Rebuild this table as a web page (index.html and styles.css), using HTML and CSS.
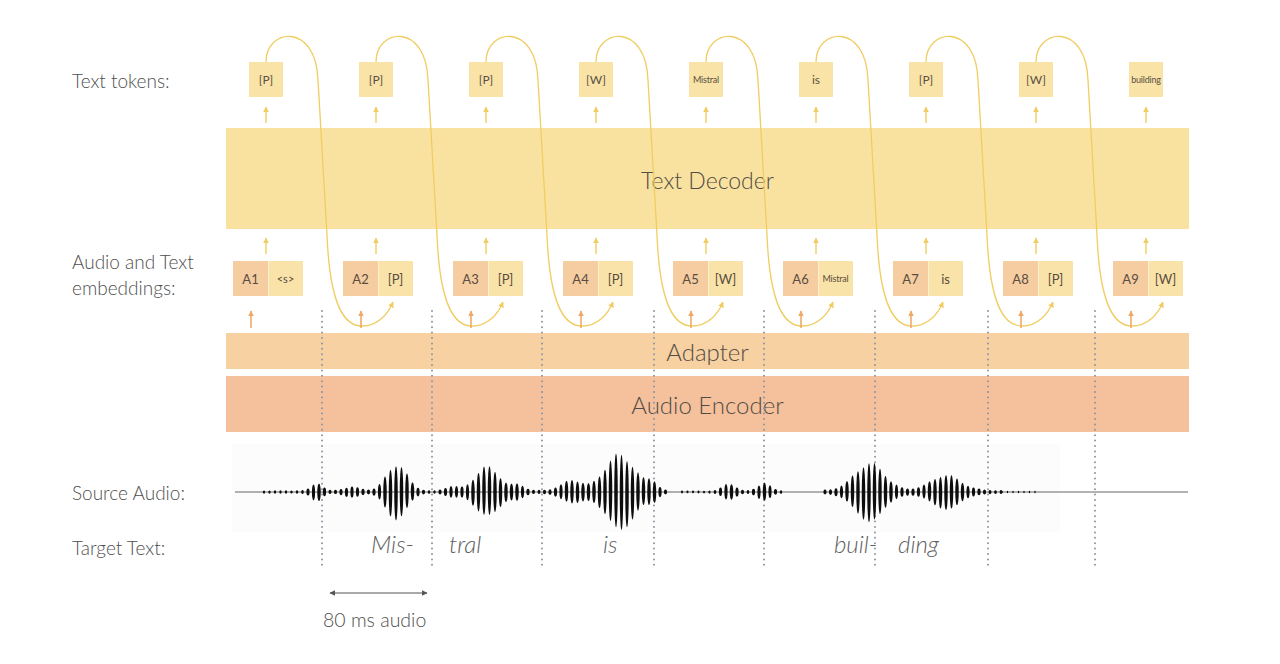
FILE: index.html
```html
<!DOCTYPE html>
<html lang="en">
<head>
<meta charset="utf-8">
<title>Streaming speech-to-text architecture</title>
<link rel="stylesheet" href="styles.css">
</head>
<body>
<div class="diagram">
  <div class="row row-tokens">
    <div class="label">Text tokens:</div>
    <div class="track">
      <div class="cell"><div class="tok">[P]</div></div>
      <div class="cell"><div class="tok">[P]</div></div>
      <div class="cell"><div class="tok">[P]</div></div>
      <div class="cell"><div class="tok">[W]</div></div>
      <div class="cell"><div class="tok small">Mistral</div></div>
      <div class="cell"><div class="tok">is</div></div>
      <div class="cell"><div class="tok">[P]</div></div>
      <div class="cell"><div class="tok">[W]</div></div>
      <div class="cell"><div class="tok small">building</div></div>
    </div>
  </div>

  <div class="row row-decoder">
    <div class="label"></div>
    <div class="band decoder">Text Decoder</div>
  </div>

  <div class="row row-emb">
    <div class="label">Audio and Text<br>embeddings:</div>
    <div class="track emb-track">
      <div class="cell"><div class="emb"><span class="a">A1</span><span class="t mid">&lt;s&gt;</span></div></div>
      <div class="cell"><div class="emb"><span class="a">A2</span><span class="t">[P]</span></div></div>
      <div class="cell"><div class="emb"><span class="a">A3</span><span class="t">[P]</span></div></div>
      <div class="cell"><div class="emb"><span class="a">A4</span><span class="t">[P]</span></div></div>
      <div class="cell"><div class="emb"><span class="a">A5</span><span class="t">[W]</span></div></div>
      <div class="cell"><div class="emb"><span class="a">A6</span><span class="t small">Mistral</span></div></div>
      <div class="cell"><div class="emb"><span class="a">A7</span><span class="t">is</span></div></div>
      <div class="cell"><div class="emb"><span class="a">A8</span><span class="t">[P]</span></div></div>
      <div class="cell"><div class="emb"><span class="a">A9</span><span class="t">[W]</span></div></div>
    </div>
  </div>

  <div class="row row-adapter">
    <div class="label"></div>
    <div class="band adapter">Adapter</div>
  </div>

  <div class="row row-encoder">
    <div class="label"></div>
    <div class="band encoder">Audio Encoder</div>
  </div>

  <div class="row row-audio">
    <div class="label">Source Audio:</div>
    <div class="wave-panel"></div>
  </div>

  <div class="row row-target">
    <div class="label">Target Text:</div>
  </div>

  <div class="row row-scale">
    <div class="label"></div>
    <div class="scale-text">80 ms audio</div>
  </div>

  <svg class="overlay" width="1280" height="664" viewBox="0 0 1280 664">
    <defs>
      <marker id="hy" viewBox="0 0 10 10" refX="9" refY="5" markerWidth="6" markerHeight="6" markerUnits="userSpaceOnUse" orient="auto">
        <path d="M0,0 L10,5 L0,10 z" fill="#F0CD62"/>
      </marker>
      <marker id="ho" viewBox="0 0 10 10" refX="9" refY="5" markerWidth="6" markerHeight="6" markerUnits="userSpaceOnUse" orient="auto">
        <path d="M0,0 L10,5 L0,10 z" fill="#EDAA68"/>
      </marker>
      <marker id="hg" viewBox="0 0 10 10" refX="9" refY="5" markerWidth="6" markerHeight="6" markerUnits="userSpaceOnUse" orient="auto-start-reverse">
        <path d="M0,0 L10,5 L0,10 z" fill="#555"/>
      </marker>
    </defs>

    <!-- dotted time boundaries -->
    <g class="dots">
      <line x1="322" y1="311" x2="322" y2="568"/>
      <line x1="432" y1="311" x2="432" y2="568"/>
      <line x1="542" y1="311" x2="542" y2="568"/>
      <line x1="654" y1="311" x2="654" y2="568"/>
      <line x1="764" y1="311" x2="764" y2="568"/>
      <line x1="875" y1="311" x2="875" y2="568"/>
      <line x1="988" y1="311" x2="988" y2="568"/>
      <line x1="1095" y1="311" x2="1095" y2="568"/>
    </g>

    <!-- feedback curves: token i -> embedding i+1 -->
    <g class="curves">
      <path d="M266,62 C266,28 316,22 318,80 L327,235 C330,310 346,326 362,326 C378,326 388,314 393,302" marker-end="url(#hy)"/>
      <path transform="translate(110,0)" d="M266,62 C266,28 316,22 318,80 L327,235 C330,310 346,326 362,326 C378,326 388,314 393,302" marker-end="url(#hy)"/>
      <path transform="translate(220,0)" d="M266,62 C266,28 316,22 318,80 L327,235 C330,310 346,326 362,326 C378,326 388,314 393,302" marker-end="url(#hy)"/>
      <path transform="translate(330,0)" d="M266,62 C266,28 316,22 318,80 L327,235 C330,310 346,326 362,326 C378,326 388,314 393,302" marker-end="url(#hy)"/>
      <path transform="translate(440,0)" d="M266,62 C266,28 316,22 318,80 L327,235 C330,310 346,326 362,326 C378,326 388,314 393,302" marker-end="url(#hy)"/>
      <path transform="translate(550,0)" d="M266,62 C266,28 316,22 318,80 L327,235 C330,310 346,326 362,326 C378,326 388,314 393,302" marker-end="url(#hy)"/>
      <path transform="translate(660,0)" d="M266,62 C266,28 316,22 318,80 L327,235 C330,310 346,326 362,326 C378,326 388,314 393,302" marker-end="url(#hy)"/>
      <path transform="translate(770,0)" d="M266,62 C266,28 316,22 318,80 L327,235 C330,310 346,326 362,326 C378,326 388,314 393,302" marker-end="url(#hy)"/>
    </g>

    <!-- decoder -> tokens arrows -->
    <g class="up-y">
      <line x1="266" y1="123" x2="266" y2="107" marker-end="url(#hy)"/>
      <line x1="376" y1="123" x2="376" y2="107" marker-end="url(#hy)"/>
      <line x1="486" y1="123" x2="486" y2="107" marker-end="url(#hy)"/>
      <line x1="596" y1="123" x2="596" y2="107" marker-end="url(#hy)"/>
      <line x1="706" y1="123" x2="706" y2="107" marker-end="url(#hy)"/>
      <line x1="816" y1="123" x2="816" y2="107" marker-end="url(#hy)"/>
      <line x1="926" y1="123" x2="926" y2="107" marker-end="url(#hy)"/>
      <line x1="1036" y1="123" x2="1036" y2="107" marker-end="url(#hy)"/>
      <line x1="1146" y1="123" x2="1146" y2="107" marker-end="url(#hy)"/>
      <!-- embeddings -> decoder -->
      <line x1="266" y1="254" x2="266" y2="238" marker-end="url(#hy)"/>
      <line x1="376" y1="254" x2="376" y2="238" marker-end="url(#hy)"/>
      <line x1="486" y1="254" x2="486" y2="238" marker-end="url(#hy)"/>
      <line x1="596" y1="254" x2="596" y2="238" marker-end="url(#hy)"/>
      <line x1="706" y1="254" x2="706" y2="238" marker-end="url(#hy)"/>
      <line x1="816" y1="254" x2="816" y2="238" marker-end="url(#hy)"/>
      <line x1="926" y1="254" x2="926" y2="238" marker-end="url(#hy)"/>
      <line x1="1036" y1="254" x2="1036" y2="238" marker-end="url(#hy)"/>
      <line x1="1146" y1="254" x2="1146" y2="238" marker-end="url(#hy)"/>
    </g>

    <!-- adapter -> audio embeddings -->
    <g class="up-o">
      <line x1="251" y1="328" x2="251" y2="311" marker-end="url(#ho)"/>
      <line x1="361" y1="328" x2="361" y2="311" marker-end="url(#ho)"/>
      <line x1="471" y1="328" x2="471" y2="311" marker-end="url(#ho)"/>
      <line x1="581" y1="328" x2="581" y2="311" marker-end="url(#ho)"/>
      <line x1="691" y1="328" x2="691" y2="311" marker-end="url(#ho)"/>
      <line x1="801" y1="328" x2="801" y2="311" marker-end="url(#ho)"/>
      <line x1="911" y1="328" x2="911" y2="311" marker-end="url(#ho)"/>
      <line x1="1021" y1="328" x2="1021" y2="311" marker-end="url(#ho)"/>
      <line x1="1131" y1="328" x2="1131" y2="311" marker-end="url(#ho)"/>
    </g>

    <!-- waveform -->
    <line class="baseline" x1="235" y1="492" x2="1188" y2="492"/>
    <g id="wave" class="wave"></g>

    <!-- target text -->
    <g class="target">
      <text x="371" y="553">Mis-</text>
      <text x="449" y="553">tral</text>
      <text x="603" y="553">is</text>
      <text x="834" y="553">buil-</text>
      <text x="898" y="553">ding</text>
    </g>

    <!-- 80 ms scale -->
    <line class="scale" x1="330" y1="593" x2="427" y2="593" marker-start="url(#hg)" marker-end="url(#hg)"/>
  </svg>
</div>
<script src="wave.js"></script>
</body>
</html>
```

FILE: styles.css
```css
html, body {
  margin: 0;
  padding: 0;
  background: #ffffff;
}

.diagram {
  position: relative;
  width: 1280px;
  height: 664px;
  overflow: hidden;
  font-family: Lato, "Open Sans", "DejaVu Sans", sans-serif;
  font-weight: 300;
  color: #5a5a5a;
}

.row {
  display: flex;
}

.label {
  flex: none;
  width: 139px;
  padding-left: 72px;
  font-size: 19px;
  line-height: 20px;
  color: #4f4f4f;
}

.track {
  display: grid;
  grid-template-columns: repeat(9, 110px);
  align-content: start;
}

.cell {
  display: flex;
  justify-content: center;
}

/* text tokens */
.row-tokens {
  height: 128px;
}

.row-tokens .label {
  padding-top: 71px;
}

.row-tokens .track {
  padding-top: 62px;
}

.tok {
  width: 34px;
  height: 35px;
  background: #f9e3a6;
  display: flex;
  align-items: center;
  justify-content: center;
  font-size: 12px;
  font-weight: 400;
  color: #5a5044;
}

.tok.small {
  font-size: 9px;
  letter-spacing: -0.2px;
}

/* bands */
.band {
  flex: none;
  margin-left: 15px;
  width: 963px;
  display: flex;
  align-items: center;
  justify-content: center;
  color: #524c46;
}

.row-decoder {
  height: 101px;
}

.decoder {
  height: 101px;
  background: #f9e29f;
  font-size: 23px;
  padding-top: 2px;
  box-sizing: border-box;
}

/* embeddings */
.row-emb {
  height: 104px;
}

.row-emb .label {
  padding-top: 20px;
  line-height: 26px;
}

.emb-track {
  padding-top: 32px;
  padding-left: 2px;
}

.emb {
  display: flex;
  height: 35px;
}

.emb span {
  width: 35px;
  display: flex;
  align-items: center;
  justify-content: center;
  font-size: 13px;
  font-weight: 400;
  color: #5a4c40;
}

.emb .a {
  background: #f5cda0;
}

.emb .t {
  background: #f9e3a8;
  box-shadow: inset 1px 0 0 rgba(255, 255, 255, 0.45);
}

.emb .t.mid {
  font-size: 11px;
}

.emb .t.small {
  font-size: 9px;
  letter-spacing: -0.2px;
}

.row-adapter {
  height: 36px;
}

.adapter {
  height: 36px;
  background: #f7d1a1;
  font-size: 24px;
}

.row-encoder {
  height: 56px;
  margin-top: 7px;
}

.encoder {
  height: 56px;
  background: #f5c19c;
  font-size: 24px;
}

/* audio */
.row-audio {
  height: 88px;
}

.row-audio .label {
  padding-top: 51px;
}

.wave-panel {
  flex: none;
  margin-left: 21px;
  margin-top: 12px;
  width: 828px;
  height: 88px;
  background: #fcfcfc;
}

.row-target {
  height: 50px;
}

.row-target .label {
  padding-top: 18px;
}

.row-scale {
  height: 94px;
}

.scale-text {
  margin-left: 112px;
  padding-top: 40px;
  font-size: 19.5px;
  line-height: 20px;
  color: #4f4f4f;
}

/* overlay drawing */
.overlay {
  position: absolute;
  left: 0;
  top: 0;
  pointer-events: none;
}

.dots line {
  stroke: #8a96a3;
  stroke-width: 2;
  stroke-linecap: round;
  stroke-dasharray: 0 5.4;
}

.curves path {
  fill: none;
  stroke: #f0cd62;
  stroke-width: 1.3;
}

.up-y line {
  stroke: #f0cd62;
  stroke-width: 1.4;
}

.up-o line {
  stroke: #edaa68;
  stroke-width: 1.6;
}

.baseline {
  stroke: #666666;
  stroke-width: 1;
}

.wave ellipse {
  fill: #0d0d0d;
}

.target text {
  font-family: Lato, "Open Sans", sans-serif;
  font-style: italic;
  font-weight: 300;
  font-size: 24px;
  fill: #606060;
}

.scale {
  stroke: #555555;
  stroke-width: 1.2;
}
```

FILE: wave.js
```js
(function () {
  var NS = 'http://www.w3.org/2000/svg';
  var g = document.getElementById('wave');
  var Y = 492;
  var regions = [
    [264, 440, 1.8],
    [440, 666, 2.0],
    [682, 782, 1.7],
    [825, 1002, 2.0],
    [1002, 1036, 0.8]
  ];
  var peaks = [
    [317, 8, 5], [352, 3.5, 8], [397, 27, 10],
    [452, 5, 6], [487, 26, 12], [518, 6, 6],
    [572, 10, 10], [620, 36, 15], [652, 9, 5],
    [729, 8, 6], [764, 8, 6],
    [870, 28, 15], [945, 17, 15]
  ];
  function env(x) {
    var a = 0;
    for (var i = 0; i < peaks.length; i++) {
      var p = peaks[i];
      a += p[1] * Math.exp(-Math.pow(x - p[0], 2) / (2 * p[2] * p[2]));
    }
    return a;
  }
  for (var r = 0; r < regions.length; r++) {
    var s = regions[r][0], e = regions[r][1], base = regions[r][2];
    for (var x = s; x < e; x += 5.5) {
      var a = (base + env(x)) * (0.84 + 0.16 * Math.abs(Math.sin(x * 1.7)));
      var up = a * (1 + 0.07 * Math.sin(x * 0.9));
      var dn = a * (1 - 0.07 * Math.sin(x * 1.3));
      var ry = Math.max(1.3, (up + dn) / 2);
      var rx = a > 8 ? 1.75 : (a > 3 ? 1.6 : Math.max(0.7, Math.min(1.6, a * 0.7)));
      var el = document.createElementNS(NS, 'ellipse');
      el.setAttribute('cx', x.toFixed(1));
      el.setAttribute('cy', (Y - (up - dn) / 2).toFixed(1));
      el.setAttribute('rx', rx.toFixed(2));
      el.setAttribute('ry', ry.toFixed(2));
      g.appendChild(el);
    }
  }
})();
```
